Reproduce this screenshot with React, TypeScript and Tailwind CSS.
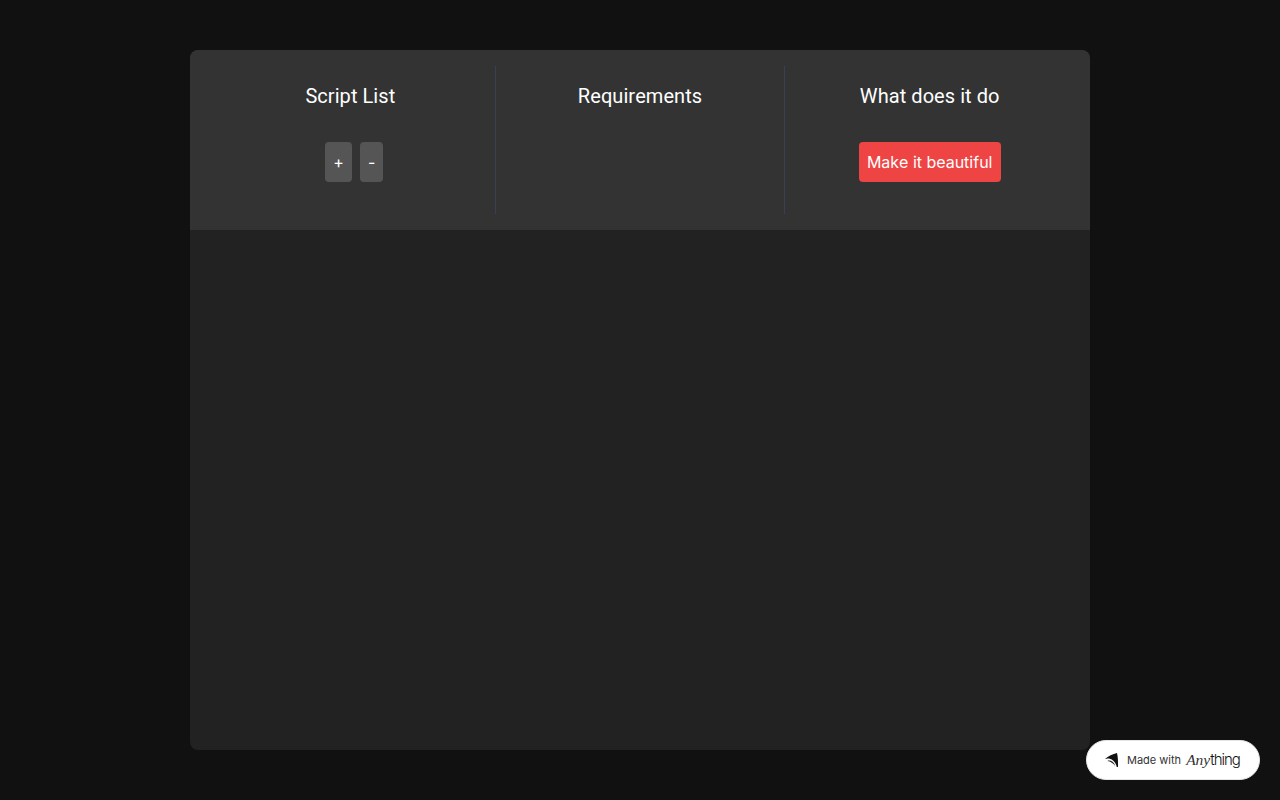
import React from 'react';

const Badge = () => (
  <div className="fixed bottom-5 right-5 flex h-10 w-[174px] items-center rounded-full border border-[#e5e5e5] bg-white pl-[18px]">
    <svg width="14" height="14" viewBox="0 0 14 14" className="shrink-0">
      <path d="M0 6 C3 3 8 1 12 0 C13 4 13.2 9 13 14 L11.8 14 C11 10 8 6.4 4 5.6 C2.6 5.4 1.2 5.6 0 6 Z" fill="#111111" />
      <path d="M2.4 8 C4.8 6.8 8.6 8.2 10.4 13 C8.4 10.4 5.6 8.4 2.4 8 Z" fill="#222222" />
    </svg>
    <span className="ml-2 font-['Inter',sans-serif] text-[11px] text-[#333333]">Made with</span>
    <span className="ml-[5px] flex items-baseline">
      <span className="font-['Liberation_Serif',serif] text-[15.5px] italic text-[#333333]">Any</span>
      <span className="font-['Inter',sans-serif] text-[15px] font-light tracking-[-1px] text-[#111111]">thing</span>
    </span>
  </div>
);

export default function App() {
  return (
    <div className="flex min-h-screen items-center justify-center bg-[#111111] font-['Inter',sans-serif] text-white [font-kerning:none]">
      <div className="flex h-[700px] w-[900px] flex-col overflow-hidden rounded-lg bg-[#222222]">
        <div className="flex h-[180px] bg-[#333333] p-4">
          <div className="flex flex-1 flex-col items-center border-r border-[#374151] p-4">
            <h2 className="mb-8 font-['Roboto',sans-serif] text-xl tracking-[0.06px]">Script List</h2>
            <div className="flex">
              <button className="ml-2 rounded bg-[#555555] p-2">+</button>
              <button className="ml-2 rounded bg-[#555555] p-2">-</button>
            </div>
          </div>
          <div className="flex flex-1 flex-col items-center border-r border-[#374151] p-4">
            <h2 className="mb-8 font-['Roboto',sans-serif] text-xl tracking-[0.06px]">Requirements</h2>
          </div>
          <div className="flex flex-1 flex-col items-center p-4">
            <h2 className="mb-8 font-['Roboto',sans-serif] text-xl tracking-[0.06px]">What does it do</h2>
            <button className="w-[142px] rounded bg-[#ef4444] py-2">Make it beautiful</button>
          </div>
        </div>
        <div className="flex-1" />
      </div>
      <Badge />
    </div>
  );
}
